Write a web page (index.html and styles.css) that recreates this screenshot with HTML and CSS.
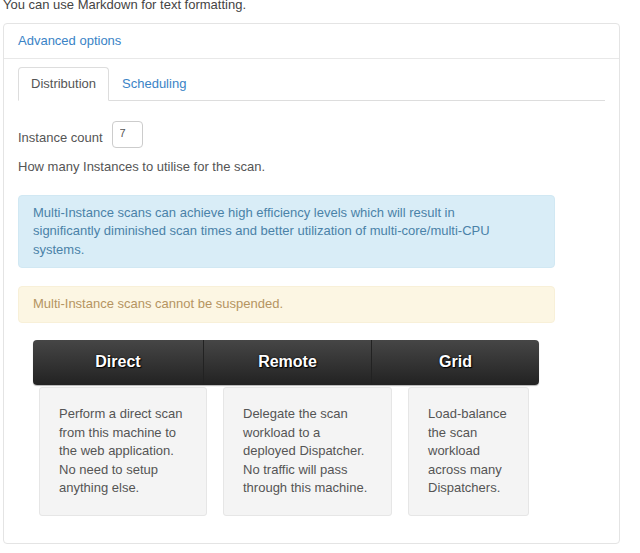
FILE: index.html
```html
<html>
  <head>
    <meta charset="UTF-8">
    <title>Scan options</title>
    <link rel="stylesheet" href="styles.css">
  </head>
  <body>
    <p class="hint">You can use Markdown for text formatting.</p>

    <div class="panel">
      <div class="panel-heading"><a href="#">Advanced options</a></div>

      <div class="panel-body">
        <ul class="tabs">
          <li class="tab active"><a href="#">Distribution</a></li>
          <li class="tab"><a href="#">Scheduling</a></li>
        </ul>

        <div class="count-row">
          <label for="count">Instance count</label>
          <input id="count" type="text" class="count-box" value="7">
        </div>
        <p class="help">How many Instances to utilise for the scan.</p>

        <div class="alert alert-info">Multi-Instance scans can achieve high efficiency levels which will result in significantly diminished scan times and better utilization of multi-core/multi-CPU systems.</div>
        <div class="alert alert-warning">Multi-Instance scans cannot be suspended.</div>

        <div class="modes">
          <div class="mode first">Direct</div>
          <div class="mode">Remote</div>
          <div class="mode">Grid</div>
        </div>

        <div class="cards">
          <div class="card direct">Perform a direct scan from this machine to the web application. No need to setup anything else.</div>
          <div class="card remote">Delegate the scan workload to a deployed Dispatcher. No traffic will pass through this machine.</div>
          <div class="card grid">Load-balance the scan workload across many Dispatchers.</div>
        </div>
      </div>
    </div>
  </body>
</html>
```

FILE: styles.css
```css
body {
  margin: 0;
  padding: 0 3px;
  font-family: "Liberation Sans", Arial, sans-serif;
  font-size: 13px;
  line-height: 1.428571;
  color: #555;
  background: #fff;
}

a {
  color: #3a83c6;
  text-decoration: none;
}

.hint {
  margin: -4px 0 8px;
  color: #444;
}

.panel {
  width: 617px;
  box-sizing: border-box;
  border: 1px solid #e4e4e4;
  border-radius: 4px;
}

.panel-heading {
  height: 34px;
  line-height: 33px;
  padding: 0 14px;
  border-bottom: 1px solid #e8e8e8;
}

.panel-body {
  padding: 8px 14px 27px;
}

.tabs {
  display: flex;
  list-style: none;
  margin: 0;
  padding: 0;
  border-bottom: 1px solid #ddd;
}

.tab {
  margin-bottom: -1px;
}

.tab a {
  display: block;
  padding: 7px 12px;
  border: 1px solid transparent;
  border-radius: 4px 4px 0 0;
}

.tab.active a {
  color: #555;
  background: #fff;
  border-color: #ddd #ddd transparent;
}

.count-row {
  display: flex;
  align-items: flex-end;
  margin-top: 20px;
}

.count-row label {
  margin-right: 9px;
  margin-bottom: 1px;
}

.count-box {
  box-sizing: border-box;
  width: 31px;
  height: 27px;
  margin: 0;
  padding: 0 0 4px 7px;
  border: 1px solid #ccc;
  border-radius: 4px;
  font-family: inherit;
  font-size: 11px;
  color: #555;
}

.help {
  margin: 10px 0 18px;
}

.alert {
  width: 537px;
  box-sizing: border-box;
  padding: 8px 60px 8px 14px;
  border: 1px solid transparent;
  border-radius: 4px;
  margin-bottom: 18px;
}

.alert-info {
  background: #d9edf7;
  border-color: #d1e8f3;
  color: #4a82a8;
}

.alert-warning {
  background: #fcf6e3;
  border-color: #f8f0d8;
  color: #b59461;
  margin-bottom: 17px;
}

.modes {
  display: flex;
  width: 506px;
  height: 45px;
  margin-left: 15px;
  border-radius: 4px;
  background: linear-gradient(#464646, #222);
  box-shadow: 0 1px 1px rgba(0, 0, 0, 0.3);
}

.mode {
  flex: 1;
  line-height: 44px;
  text-align: center;
  font-size: 16px;
  font-weight: bold;
  color: #fff;
  text-shadow: 0 0 2px #000, 1px 1px 1px #000;
  border-left: 1px solid #222;
}

.mode.first {
  flex: 0 0 170px;
  border-left: none;
}

.cards {
  display: flex;
  align-items: flex-start;
  gap: 16px;
  margin: 2px 0 0 21px;
}

.card {
  box-sizing: border-box;
  padding: 17px 18px 17px 19px;
  background: #f4f4f4;
  border: 1px solid #e6e6e6;
  border-radius: 3px;
  color: #555;
}

.card.direct {
  width: 168px;
}

.card.remote {
  width: 169px;
}

.card.grid {
  width: 121px;
  height: 129px;
}
```
